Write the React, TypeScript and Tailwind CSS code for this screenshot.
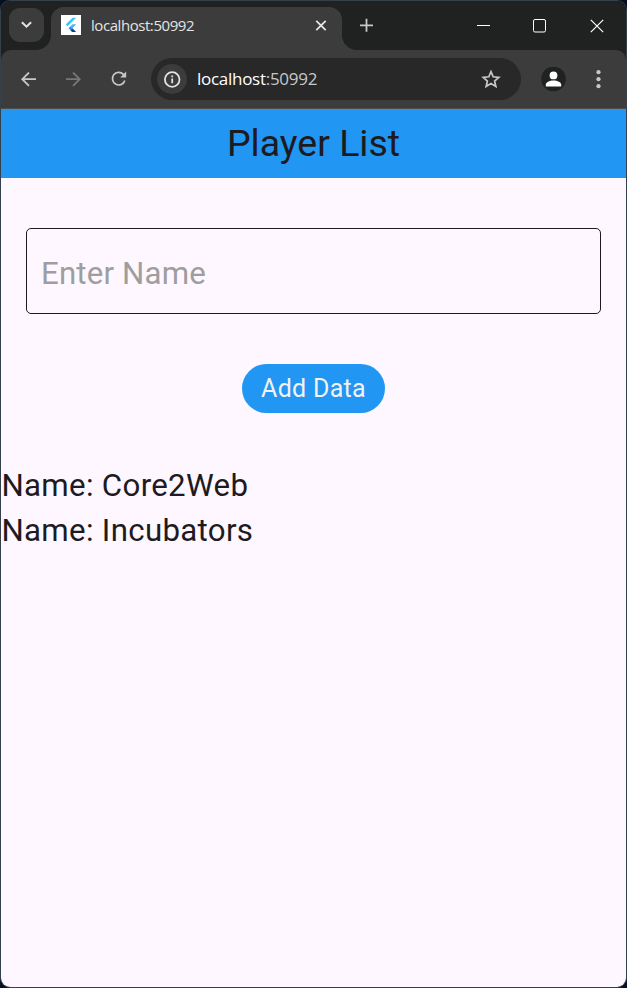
import React, { useState } from "react";

const chromeFont = "font-['Open_Sans','Noto_Sans',sans-serif]";

function FlutterLogo() {
  return (
    <svg width="20" height="20" viewBox="0 0 20 20" className="shrink-0 bg-white">
      <path d="M11.6 2.8h3.6L6.6 11.2 4.7 9.4z" fill="#42c3f7" />
      <path d="M11.6 9.3h3.6l-3.8 3.9-1.9-1.9z" fill="#42b8f5" />
      <path d="M9.5 11.3l-1.9 2 1.9 1.9 1.9-2z" fill="#2196e8" />
      <path d="M9.5 15.2l1.9-2 3.8 3.8h-3.4c-.9 0-1.5-.9-2.3-1.8z" fill="#06489b" />
    </svg>
  );
}

function TabStrip() {
  return (
    <div className="flex h-[49px] shrink-0 bg-[#1f2221] pl-2 text-[#e3e3e3]">
      <button className="mt-[7px] flex h-[34px] w-[35px] items-center justify-center rounded-[11px] bg-[#3c3c3c]">
        <svg width="11" height="8" viewBox="0 0 11 8" fill="none" stroke="currentColor" strokeWidth="2">
          <path d="M.9 1.2l4.6 4.5 4.6-4.5" />
        </svg>
      </button>
      <div className="relative ml-[7px] mt-[6px] flex h-[43px] w-[291px] rounded-t-[13px] bg-[#3c3c3c] pl-[10px] pt-2">
        <svg className="absolute -left-[15px] bottom-0" width="15" height="15" viewBox="0 0 15 15">
          <path d="M15 0v15H0C8.3 15 15 8.3 15 0z" fill="#3c3c3c" />
        </svg>
        <svg className="absolute -right-[15px] bottom-0" width="15" height="15" viewBox="0 0 15 15">
          <path d="M0 0v15h15C6.7 15 0 8.3 0 0z" fill="#3c3c3c" />
        </svg>
        <FlutterLogo />
        <span className="ml-[10px] h-5 w-[215px] text-[15px] leading-[21px] tracking-[-0.44px]">localhost:50992</span>
        <svg className="ml-[9px] mt-[5px]" width="12" height="11" viewBox="0 0 12 11" stroke="currentColor" strokeWidth="1.8">
          <path d="M1.3 .8l9.4 9.4M10.7 .8L1.3 10.2" />
        </svg>
      </div>
      <svg className="ml-[18px] mt-[17px]" width="13" height="14" viewBox="0 0 13 14" stroke="#c7c7c7" strokeWidth="1.8">
        <path d="M0 7.3h13M6.5.8v13" />
      </svg>
      <div className="ml-[104px] mt-[18px] flex text-white">
        <svg width="13" height="13" viewBox="0 0 13 13" stroke="currentColor">
          <path d="M0 6.5h13" />
        </svg>
        <svg className="ml-[43px]" width="13" height="14" viewBox="0 0 13 14" fill="none" stroke="currentColor">
          <rect x=".5" y=".5" width="12" height="12.5" rx="1.5" />
        </svg>
        <svg className="ml-[44px]" width="14" height="14" viewBox="0 0 14 14" stroke="currentColor" strokeWidth="1.2">
          <path d="M.8.8l12.4 12.4M13.2.8L.8 13.2" />
        </svg>
      </div>
    </div>
  );
}

function Toolbar() {
  return (
    <div className="shrink-0 bg-[#1f2221]">
      <div className="flex h-[59px] items-center rounded-t-[10px] border-b border-[#514d45] bg-[#3c3c3c] pl-5 text-[#c7c7c7]">
        <svg width="15" height="15" viewBox="0 0 15 15" fill="none" stroke="currentColor" strokeWidth="1.8">
          <path d="M15 7.2H1.4M8 .5L1.3 7.2 8 13.9" />
        </svg>
        <svg className="ml-[30px] text-[#777]" width="15" height="15" viewBox="0 0 15 15" fill="none" stroke="currentColor" strokeWidth="1.8">
          <path d="M0 7.2h13.6M7 .5l6.7 6.7L7 13.9" />
        </svg>
        <svg className="ml-[30px]" width="16" height="16" viewBox="0 0 16 16" fill="none" stroke="currentColor" strokeWidth="1.7">
          <path d="M13.8 9.4A6.3 6.3 0 1 1 12.4 3.4l1.3 1.3" />
          <path d="M15.2.4v6H9.2z" fill="currentColor" stroke="none" />
        </svg>
        <div className="ml-6 flex h-[42px] w-[370px] items-center rounded-full bg-[#282828] pl-[6px]">
          <div className="flex h-[30px] w-[30px] items-center justify-center rounded-full bg-[#3c3c3c] text-[#e3e3e3]">
            <svg width="17" height="17" viewBox="0 0 17 17" fill="none" stroke="currentColor" strokeWidth="1.8">
              <circle cx="8.2" cy="8.5" r="7.3" />
              <path d="M8.2 7.6v4.7M8.2 4.5v1.8" />
            </svg>
          </div>
          <div className="ml-[10px] w-[283px] whitespace-nowrap text-[17px] leading-6 tracking-[-0.28px] text-[#c7c7c7]">
            <span className="text-white">localhost</span>:50992
          </div>
          <svg width="21" height="20" viewBox="0 0 21 20" fill="none" stroke="currentColor" strokeWidth="1.7">
            <path d="M11 2.7l2.2 5.1 5.6.5-4.2 3.7 1.25 5.5L11 14.6l-4.85 2.9L7.4 12 3.2 8.3l5.6-.5z" />
          </svg>
        </div>
        <svg className="ml-5" width="25" height="25" viewBox="0 0 25 25">
          <circle cx="12.5" cy="12" r="12.3" fill="#1f2221" />
          <circle cx="12.5" cy="8.4" r="3.9" fill="white" />
          <path d="M4.8 19.5v-2c0-2.2 3.7-4 7.7-4s7.7 1.8 7.7 4v2z" fill="white" />
        </svg>
        <svg className="ml-[30px]" width="5" height="19" viewBox="0 0 5 19" fill="currentColor">
          <circle cx="2.5" cy="2.2" r="2.1" />
          <circle cx="2.5" cy="9.2" r="2.1" />
          <circle cx="2.5" cy="16.2" r="2.1" />
        </svg>
      </div>
    </div>
  );
}

function PlayerList() {
  const [players, setPlayers] = useState(["Core2Web", "Incubators"]);
  const [name, setName] = useState("");
  const addPlayer = () => {
    if (name.trim()) {
      setPlayers([...players, name.trim()]);
      setName("");
    }
  };
  return (
    <main className="flex flex-1 flex-col bg-[#fef7ff] font-[Roboto,sans-serif] text-[#1d1b20]">
      <h1 className="h-[69px] bg-[#2196f3] text-center text-[37.5px] leading-[68px]">Player List</h1>
      <div className="px-[25px] pt-[50px]">
        <input
          value={name}
          onChange={(e) => setName(e.target.value)}
          placeholder="Enter Name"
          className="block h-[86px] w-full rounded-[5px] border border-[#1d1b20] px-[14px] pt-[5px] text-[31.25px] tracking-[0.16px] outline-none placeholder:text-[#9e9e9e]"
        />
      </div>
      <button
        onClick={addPlayer}
        className="mt-[50px] h-[49px] w-[143px] self-center rounded-full bg-[#2196f3] text-[25px] leading-[49px] tracking-[0.3px] text-[#f2f2f2]"
      >
        Add Data
      </button>
      <ul className="mt-[50px] pl-[0.4px] text-[31.25px] leading-[45px] tracking-[0.31px]">
        {players.map((player) => (
          <li key={player}>Name: {player}</li>
        ))}
      </ul>
    </main>
  );
}

export default function App() {
  return (
    <div className="h-[988px] w-[627px] bg-[#07101f]">
      <div className={`flex h-full flex-col overflow-hidden rounded-[10px] border border-[#34414d] ${chromeFont}`}>
        <TabStrip />
        <Toolbar />
        <PlayerList />
      </div>
    </div>
  );
}
